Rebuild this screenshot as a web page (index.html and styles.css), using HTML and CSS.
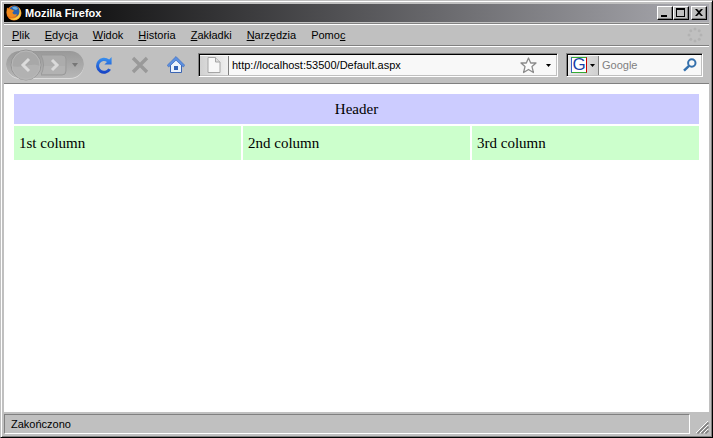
FILE: index.html
```html
<!DOCTYPE html>
<html lang="pl">
<head>
    <meta charset="UTF-8">
    <meta name="viewport" content="width=device-width, initial-scale=1.0">
    <title>Mozilla Firefox</title>
    <link rel="stylesheet" href="styles.css">
</head>
<body>
    <div class="window">
        <div class="titlebar">
            <svg class="logo" width="16" height="16" viewBox="0 0 16 16">
                <circle cx="8" cy="8" r="7.5" fill="#e8761a"/>
                <circle cx="8.5" cy="6.2" r="5.4" fill="#2b62ad"/>
                <path d="M6 2.5C8 1 11 1.5 12 3.5L10 5L7.5 4Z" fill="#69b0e0"/>
                <path d="M1 2.5L3 4.2C4.5 3.6 5.5 4 6.3 5L8.3 5.8L6.5 7.3C6.6 9.5 9 10 10.5 9C11.5 10 9.5 12 7.5 11.7C4.5 13.5 0.5 10 0.6 6.5Z" fill="#f08a1c"/>
                <path d="M12.5 2.5C15.5 5 15.7 10 13 13C10.5 15.5 6 15.5 3.5 13.3C8 14.5 12.5 12 13.3 8C13.7 6 13.4 4 12.5 2.5Z" fill="#f9cf45"/>
            </svg>
            <span class="title">Mozilla Firefox</span>
            <button class="win-btn" aria-label="Minimalizuj">
                <svg width="14" height="12" viewBox="0 0 14 12"><path d="M3 8h6v2H3z"/></svg>
            </button>
            <button class="win-btn" aria-label="Maksymalizuj">
                <svg width="14" height="12" viewBox="0 0 14 12"><path d="M2 1h9v9H2zM3 3v6h7V3z" fill-rule="evenodd"/></svg>
            </button>
            <button class="win-btn close" aria-label="Zamknij">
                <svg width="14" height="12" viewBox="0 0 14 12"><path d="M3 2h2l2 2l2-2h2L8 5.5L11 9H9L7 7L5 9H3L6 5.5Z"/></svg>
            </button>
        </div>

        <div class="menubar">
            <button><u>P</u>lik</button>
            <button><u>E</u>dycja</button>
            <button><u>W</u>idok</button>
            <button><u>H</u>istoria</button>
            <button><u>Z</u>akładki</button>
            <button><u>N</u>arzędzia</button>
            <button>Pomo<u>c</u></button>
            <svg class="throbber" width="16" height="16" viewBox="0 0 16 16" fill="#b2b2b2">
                <circle cx="8" cy="2" r="1.5"/><circle cx="12.2" cy="3.8" r="1.5"/>
                <circle cx="14" cy="8" r="1.5"/><circle cx="12.2" cy="12.2" r="1.5"/>
                <circle cx="8" cy="14" r="1.5"/><circle cx="3.8" cy="12.2" r="1.5"/>
                <circle cx="2" cy="8" r="1.5"/><circle cx="3.8" cy="3.8" r="1.5"/>
            </svg>
        </div>

        <div class="toolbar">
            <div class="nav-pill">
                <button class="back" aria-label="Wstecz">
                    <svg width="32" height="32" viewBox="0 0 32 32">
                        <circle cx="16" cy="16" r="15" fill="#a8a8a8" stroke="#969696"/>
                        <path d="M2 17A14 14 0 0 0 30 17C22 13 10 20 2 17Z" fill="#b2b2b2"/>
                        <circle cx="16" cy="16" r="14" fill="none" stroke="#b8b8b8"/>
                        <path d="M19 10L13 16L19 22" fill="none" stroke="#dcdcdc" stroke-width="3"/>
                    </svg>
                </button>
                <button class="forward" aria-label="Dalej">
                    <svg width="26" height="22" viewBox="0 0 26 22">
                        <path d="M0 1H21Q25 1 25 5V17Q25 21 21 21H0Q5 11 0 1Z" fill="#acacac" stroke="#999"/>
                        <path d="M3 12H24V17Q24 20 21 20H1Q3 16 3 12Z" fill="#b2b2b2"/>
                        <path d="M11 6L16 11L11 16" fill="none" stroke="#dadada" stroke-width="3"/>
                    </svg>
                </button>
                <button class="recent" aria-label="Ostatnie strony">
                    <svg width="6" height="4" viewBox="0 0 6 4"><path d="M0 0h6L3 4z" fill="#777"/></svg>
                </button>
            </div>
            <button class="tool" aria-label="Odśwież">
                <svg width="18" height="18" viewBox="0 0 18 18">
                    <defs>
                        <linearGradient id="reload" x1="0" y1="0" x2="0" y2="1">
                            <stop offset="0" stop-color="#3a93f0"/>
                            <stop offset="1" stop-color="#1440c4"/>
                        </linearGradient>
                    </defs>
                    <path d="M16.6 1V8.6H9.4L12 6A4.9 4.9 0 1 0 13.2 12.4L16 13.8A8 8 0 1 1 14.2 3.6Z" fill="url(#reload)"/>
                </svg>
            </button>
            <button class="tool" aria-label="Zatrzymaj">
                <svg width="18" height="18" viewBox="0 0 18 18"><path d="M2 2L16 16M16 2L2 16" stroke="#999" stroke-width="3.4"/></svg>
            </button>
            <button class="tool" aria-label="Strona startowa">
                <svg width="18" height="18" viewBox="0 0 18 18">
                    <path d="M3.5 9L9 3.5L14.5 9V16.5H3.5Z" fill="#eaf1fb" stroke="#3b65b3"/>
                    <path d="M9 0.5L17.8 9.3L16.3 11L9 4.2L1.7 11L0.2 9.3Z" fill="#5b8fe0" stroke="#3c69bb" stroke-width="0.6"/>
                    <path d="M7 10H11V14H7Z" fill="#3161b5"/>
                </svg>
            </button>

            <div class="field url">
                <button class="identity" aria-label="Tożsamość witryny">
                    <svg width="14" height="16" viewBox="0 0 14 16">
                        <path d="M1 .5H8.5L13 5V15.5H1Z" fill="#f7f7f7" stroke="#a5a5a5"/>
                        <path d="M8.5 .5V5H13" fill="#ddd" stroke="#a5a5a5"/>
                    </svg>
                </button>
                <input type="text" aria-label="Adres" value="http://localhost:53500/Default.aspx">
                <button class="plain" aria-label="Dodaj zakładkę">
                    <svg width="17" height="17" viewBox="0 0 17 17"><path d="M8.5 1L10.7 6H16L12 9.6L13.4 15.5L8.5 12.5L3.6 15.5L5 9.6L1 6H6.3Z" fill="#fcfcfc" stroke="#8b8b8b" stroke-width="1.3" stroke-linejoin="round"/></svg>
                </button>
                <button class="plain drop" aria-label="Historia adresów">
                    <svg width="5" height="3" viewBox="0 0 5 3"><path d="M0 0h5L2.5 3z"/></svg>
                </button>
            </div>

            <div class="field search">
                <button class="engine" aria-label="Wyszukiwarka">
                    <span class="g">G</span>
                    <svg width="5" height="3" viewBox="0 0 5 3"><path d="M0 0h5L2.5 3z"/></svg>
                </button>
                <input type="text" aria-label="Szukaj" placeholder="Google">
                <button class="plain" aria-label="Szukaj">
                    <svg width="14" height="14" viewBox="0 0 14 14" fill="none" stroke="#3470ac"><circle cx="8.8" cy="5" r="3.7" stroke-width="2"/><path d="M6 7.8L1 12.7" stroke-width="2.4"/></svg>
                </button>
            </div>
        </div>

        <div class="page">
            <table class="layout">
                <tr class="header">
                    <td colspan="3">Header</td>
                </tr>
                <tr class="columns">
                    <td>1st column</td>
                    <td>2nd column</td>
                    <td>3rd column</td>
                </tr>
            </table>
        </div>

        <div class="statusbar">
            <div class="status">Zakończono</div>
            <svg class="grip" width="13" height="13" viewBox="0 0 13 13">
                <path d="M0 12L12 0M4 12L12 4M8 12L12 8" stroke="#fff"/>
                <path d="M1.5 12.5L12.5 1.5M5.5 12.5L12.5 5.5M9.5 12.5L12.5 9.5" stroke="#808080" stroke-width="1.6"/>
            </svg>
        </div>
    </div>
</body>
</html>
```

FILE: styles.css
```css
* {
    box-sizing: border-box;
}

body {
    margin: 0;
    font-family: "Liberation Sans", Arial, sans-serif;
    font-size: 11px;
    color: #000;
}

button {
    padding: 0;
    border: none;
    background: none;
    font: inherit;
    color: inherit;
}

svg {
    display: block;
    flex: none;
}

/* Window frame */
.window {
    display: flex;
    flex-direction: column;
    height: 100vh;
    padding: 2px 1px 1px 2px;
    background: #c0c0c0;
    border: 1px solid;
    border-color: #c0c0c0 #000 #000 #c0c0c0;
    box-shadow: inset 1px 1px #fff, inset -1px -1px #808080;
}

.titlebar {
    display: flex;
    align-items: center;
    height: 18px;
    margin: 1px 2px 1px 1px;
    padding: 0 2px;
    background: linear-gradient(to right, #000, #aaaab0);
}

.title {
    flex: 1;
    margin-left: 3px;
    color: #fff;
    font-weight: bold;
}

.win-btn {
    display: flex;
    width: 16px;
    height: 14px;
    background: #c0c0c0;
    border: 1px solid;
    border-color: #fff #000 #000 #fff;
    box-shadow: inset -1px -1px #808080;
}

.close {
    margin-left: 2px;
}

/* Menu */
.menubar {
    display: flex;
    align-items: center;
    height: 23px;
    margin: 0 2px 0 1px;
    padding: 0 6px 0 8px;
    gap: 15px;
    border-top: 1px solid #808080;
    border-bottom: 1px solid #808080;
    box-shadow: inset 0 1px #fff;
}

.throbber {
    margin-left: auto;
}

/* Toolbar */
.toolbar {
    display: flex;
    align-items: center;
    height: 38px;
    margin: 0 2px 0 1px;
    padding: 0 6px 0 2px;
    border-bottom: 1px solid #808080;
    box-shadow: inset 0 1px #fff;
}

.nav-pill {
    display: flex;
    align-items: center;
    width: 78px;
    height: 28px;
    padding-left: 4px;
    border-radius: 14px;
    background: linear-gradient(#999, #b8b8b8);
    box-shadow: inset 0 -1px #dcdcdc;
}

.forward {
    margin-left: -1px;
}

.recent {
    margin-left: 5px;
}

.tool {
    margin-left: 11px;
}

.tool + .tool {
    margin-left: 18px;
}

.field {
    display: flex;
    align-items: center;
    height: 24px;
    background: #f8f8f8;
    border: 1px solid;
    border-color: #808080 #fff #fff #808080;
    box-shadow: inset 1px 1px #000, inset -1px -1px #c0c0c0;
}

.field input {
    flex: 1;
    min-width: 0;
    padding: 0 3px;
    border: none;
    outline: none;
    background: none;
    font: inherit;
}

.field input::placeholder {
    color: #808080;
}

.url {
    flex: 1;
    margin-left: 13px;
    padding: 2px 6px 1px 1px;
}

.identity,
.engine {
    display: flex;
    align-items: center;
    justify-content: center;
    align-self: stretch;
    border-right: 1px solid #808080;
    background: linear-gradient(to right, #e8e8e8, #d0d0d0);
}

.identity {
    width: 29px;
    background: linear-gradient(to right, #d0d0d0, #f0f0f0);
}

.drop {
    margin-left: 9px;
}

.search {
    width: 137px;
    margin-left: 8px;
    padding: 2px 5px 1px 1px;
}

.engine {
    width: 31px;
    gap: 3px;
}

.g {
    width: 16px;
    height: 16px;
    border: 1px solid;
    border-color: #3a3 #c00 #3a3 #3a5fc8;
    background: #fff;
    color: #1a3fa8;
    font-size: 17px;
    line-height: 14px;
}

/* Web page */
.page {
    flex: 1;
    margin: 0 2px 0 1px;
    padding: 8px;
    background: #fff;
    font-family: "Liberation Serif", "Times New Roman", serif;
    font-size: 15px;
}

.layout {
    width: 100%;
    table-layout: fixed;
    border-spacing: 2px;
}

.layout td {
    padding: 5px;
}

.header td {
    height: 30px;
    background: #ccccff;
    text-align: center;
}

.columns td {
    height: 34px;
    background: #ccffcc;
}

/* Status bar */
.statusbar {
    display: flex;
    align-items: flex-end;
    gap: 6px;
    margin: 2px 2px 2px 1px;
}

.status {
    flex: 1;
    padding: 0 6px;
    border: 1px solid;
    border-color: #808080 #fff #fff #808080;
    line-height: 18px;
}
```
